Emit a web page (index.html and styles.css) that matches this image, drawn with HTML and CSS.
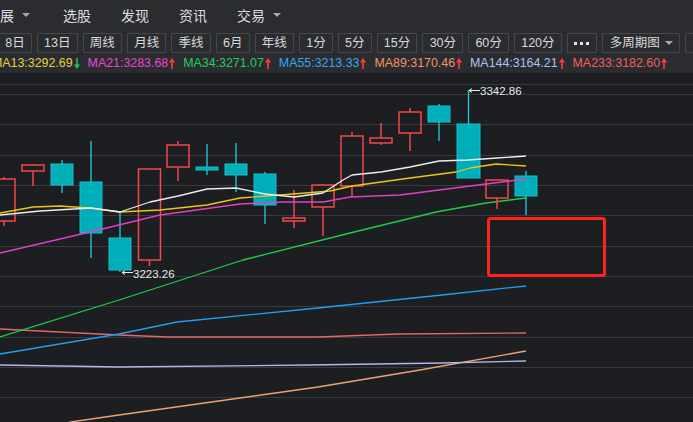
FILE: index.html
```html
<!DOCTYPE html>
<html lang="zh">
<head>
<meta charset="utf-8">
<title>K线</title>
<link rel="stylesheet" href="styles.css">
</head>
<body>
<div class="header">
  <nav class="menu">
    <div class="menu-item first">展<span class="caret"></span></div>
    <div class="menu-item">选股</div>
    <div class="menu-item">发现</div>
    <div class="menu-item">资讯</div>
    <div class="menu-item">交易<span class="caret"></span></div>
  </nav>
  <div class="toolbar">
    <div class="btn">8日</div>
    <div class="btn">13日</div>
    <div class="btn">周线</div>
    <div class="btn">月线</div>
    <div class="btn">季线</div>
    <div class="btn">6月</div>
    <div class="btn">年线</div>
    <div class="btn">1分</div>
    <div class="btn">5分</div>
    <div class="btn">15分</div>
    <div class="btn">30分</div>
    <div class="btn">60分</div>
    <div class="btn">120分</div>
    <div class="btn dots"><i></i><i></i><i></i></div>
    <div class="btn multi">多周期图<span class="caret"></span></div>
    <div class="btn">↑</div>
  </div>
  <div class="ma-row">
    <span class="ma ma13">MA13:3292.69<svg class="arr" viewBox="0 0 6 11"><path d="M3 0V7" class="dn-s"/><path d="M0 6.5L3 11L6 6.5Z" class="dn-f"/></svg></span>
    <span class="ma ma21">MA21:3283.68<svg class="arr" viewBox="0 0 6 11"><path d="M3 11V4" class="up-s"/><path d="M0 4.5L3 0L6 4.5Z" class="up-f"/></svg></span>
    <span class="ma ma34">MA34:3271.07<svg class="arr" viewBox="0 0 6 11"><path d="M3 11V4" class="up-s"/><path d="M0 4.5L3 0L6 4.5Z" class="up-f"/></svg></span>
    <span class="ma ma55">MA55:3213.33<svg class="arr" viewBox="0 0 6 11"><path d="M3 11V4" class="up-s"/><path d="M0 4.5L3 0L6 4.5Z" class="up-f"/></svg></span>
    <span class="ma ma89">MA89:3170.46<svg class="arr" viewBox="0 0 6 11"><path d="M3 11V4" class="up-s"/><path d="M0 4.5L3 0L6 4.5Z" class="up-f"/></svg></span>
    <span class="ma ma144">MA144:3164.21<svg class="arr" viewBox="0 0 6 11"><path d="M3 11V4" class="up-s"/><path d="M0 4.5L3 0L6 4.5Z" class="up-f"/></svg></span>
    <span class="ma ma233">MA233:3182.60<svg class="arr" viewBox="0 0 6 11"><path d="M3 11V4" class="up-s"/><path d="M0 4.5L3 0L6 4.5Z" class="up-f"/></svg></span>
  </div>
</div>
<div class="chart">
  <svg class="chart-svg" width="693" height="349" viewBox="0 73 693 349">
    <g class="grid">
      <path d="M0 84.5H693M0 94.5H693M0 124.5H693M0 155.5H693M0 185.5H693M0 215.5H693M0 246.5H693M0 276.5H693M0 306.5H693M0 337.5H693M0 367.5H693M0 397.5H693"/>
    </g>
    <g class="lines">
      <polyline class="l-orange" points="40,428 71,422 119,415 318,387 420,370 526,351"/>
      <polyline class="l-lav" points="0,365 119,367 309,365 442,363 526,361"/>
      <polyline class="l-salmon" points="0,329 119,335 168,337 318,337 398,334 526,333"/>
      <polyline class="l-blue" points="0,354 119,334 177,322 318,308 442,295 526,286"/>
      <polyline class="l-green" points="0,337 119,300 243,260 350,233 436,212 486,203 526,198"/>
    </g>
    <g class="candles">
      <g class="red">
        <path d="M4 177V179M4 221V226"/><rect x="-7" y="179" width="22" height="42"/>
        <path d="M33 164V165M33 171V186"/><rect x="22" y="165" width="22" height="6"/>
        <path d="M149.5 168V169M149.5 260V266"/><rect x="138.5" y="169" width="22" height="91"/>
        <path d="M178 141V145M178 167V181"/><rect x="167" y="145" width="22" height="22"/>
        <path d="M294 190V218M294 221V228"/><rect x="283" y="218" width="22" height="3"/>
        <path d="M323 184V185M323 207V236"/><rect x="312" y="185" width="22" height="22"/>
        <path d="M352 132V136M352 186V197"/><rect x="341" y="136" width="22" height="50"/>
        <path d="M381 123V138M381 143V145"/><rect x="370" y="138" width="22" height="5"/>
        <path d="M410 108V112M410 133V151"/><rect x="399" y="112" width="22" height="21"/>
        <path d="M497 198V209"/><rect x="486" y="180" width="22" height="18"/>
      </g>
      <g class="cyan">
        <path d="M62 160V193"/><rect x="51" y="164" width="22" height="21"/>
        <path d="M91 141V258"/><rect x="80" y="182" width="22" height="51"/>
        <path d="M120 212V272"/><rect x="109" y="238" width="22" height="32"/>
        <path d="M207 144V175"/><rect x="196" y="167" width="22" height="3"/>
        <path d="M236 143V192"/><rect x="225" y="164" width="22" height="11"/>
        <path d="M265 172V224"/><rect x="254" y="174" width="22" height="31"/>
        <path d="M439 104V141"/><rect x="428" y="106" width="22" height="16"/>
        <path d="M468.5 90V124"/><rect x="457" y="124" width="23" height="54"/>
        <path d="M526 171V215"/><rect x="515" y="176" width="22" height="20"/>
      </g>
    </g>
    <g class="lines">
      <polyline class="l-mag" points="0,253 90,232 160,215 240,204 283,202 323,202 350,197 400,195 486,184 526,179"/>
      <polyline class="l-yellow" points="0,213 33,207 60,206 90,208 120,212 160,210 207,205 240,198 293,194 330,191 352,186 410,178 456,172 470,168 496,164 526,166"/>
      <polyline class="l-white" points="0,215 40,211 91,208 120,212 150,202 178,196 207,189 236,188 265,194 294,197 323,193 343,180 352,175 381,172 410,167 439,161 468,160 497,158 526,156"/>
    </g>
    <g class="marks">
      <path class="mark-line" d="M469 90.5H480M469 90.5L472 88.5M469 90.5L472 92.5"/>
      <text class="mark-text" x="480" y="95">3342.86</text>
      <path class="mark-line" d="M122 272.5H133M122 272.5L125 270.5M122 272.5L125 274.5"/>
      <text class="mark-text" x="133" y="277.5">3223.26</text>
    </g>
    <rect class="highlight" x="488.5" y="218.5" width="116" height="57" rx="2"/>
  </svg>
</div>
</body>
</html>
```

FILE: styles.css
```css
html, body {
  margin: 0;
  padding: 0;
}
body {
  width: 693px;
  height: 422px;
  overflow: hidden;
  background: #1d1e22;
  font-family: "Liberation Sans", "Noto Sans CJK SC", sans-serif;
}
.header {
  background: #2b2c30;
  height: 73px;
  overflow: hidden;
}
.menu {
  height: 30px;
  display: flex;
  align-items: center;
  gap: 30px;
  white-space: nowrap;
}
.menu-item {
  font-family: "Noto Sans CJK SC", sans-serif;
  font-size: 14px;
  line-height: 1;
  color: #dcdcdc;
  display: flex;
  align-items: center;
  gap: 8px;
}
.menu-item.first {
  margin-right: 3px;
}
.caret {
  display: inline-block;
  width: 0;
  height: 0;
  border-left: 4px solid transparent;
  border-right: 4px solid transparent;
  border-top: 4px solid #a9a9ab;
}
.toolbar {
  display: flex;
  gap: 5px;
  margin-left: -2px;
  margin-top: 3px;
  height: 20px;
  white-space: nowrap;
}
.btn {
  flex-shrink: 0;
  box-sizing: border-box;
  height: 20px;
  border: 1px solid #47484d;
  border-radius: 1px;
  padding: 0 6.2px;
  display: flex;
  align-items: center;
  font-family: "Liberation Sans", "Noto Sans CJK SC", sans-serif;
  font-size: 12.5px;
  line-height: 1;
  color: #d8d8d8;
}
.btn.dots {
  width: 30px;
  justify-content: center;
  gap: 3px;
  padding: 0;
}
.btn.dots i {
  display: block;
  width: 3px;
  height: 3px;
  background: #e6e6e6;
}
.btn.multi {
  gap: 5px;
  padding: 0 6px 0 7px;
}
.ma-row {
  height: 20px;
  display: flex;
  align-items: center;
  gap: 8px;
  margin-left: -8px;
  white-space: nowrap;
}
.ma {
  display: flex;
  align-items: center;
  gap: 1px;
  font-size: 12.4px;
  line-height: 1;
  flex-shrink: 0;
}
.arr {
  width: 6px;
  height: 11px;
  display: block;
}
.up-s { stroke: #ff3b3b; stroke-width: 1.6; fill: none; }
.up-f { fill: #ff3b3b; }
.dn-s { stroke: #20c35a; stroke-width: 1.6; fill: none; }
.dn-f { fill: #20c35a; }
.ma13 { color: #e6cf3e; }
.ma21 { color: #e446d8; }
.ma34 { color: #22cc5e; }
.ma55 { color: #34a6f2; }
.ma89 { color: #f29460; }
.ma144 { color: #a9c2f2; }
.ma233 { color: #f0605e; }

.chart {
  height: 349px;
  overflow: hidden;
}
.chart-svg {
  display: block;
}
.grid path {
  stroke: #393a3f;
  stroke-width: 1;
  fill: none;
}
.lines polyline {
  fill: none;
  stroke-width: 1.3;
  stroke-linejoin: round;
}
.l-white { stroke: #ececec; }
.l-yellow { stroke: #e8c814; }
.l-mag { stroke: #e23fc9; }
.l-green { stroke: #1fcc4a; }
.l-blue { stroke: #1f9ff0; }
.l-salmon { stroke: #e06868; }
.l-lav { stroke: #b4b6e8; }
.l-orange { stroke: #f2a070; }
.red path,
.red rect {
  stroke: #f24848;
  stroke-width: 1.5;
  fill: none;
}
.cyan path {
  stroke: #1ccfdf;
  stroke-width: 1.3;
  fill: none;
}
.cyan rect {
  fill: #00aeb9;
  stroke: #12c2cc;
  stroke-width: 1;
}
.mark-line {
  stroke: #e8e8e8;
  stroke-width: 1;
  fill: none;
}
.mark-text {
  fill: #e8e8e8;
  font-family: "Liberation Sans", sans-serif;
  font-size: 11.5px;
}
.highlight {
  fill: none;
  stroke: #ff2219;
  stroke-width: 3;
}
```
